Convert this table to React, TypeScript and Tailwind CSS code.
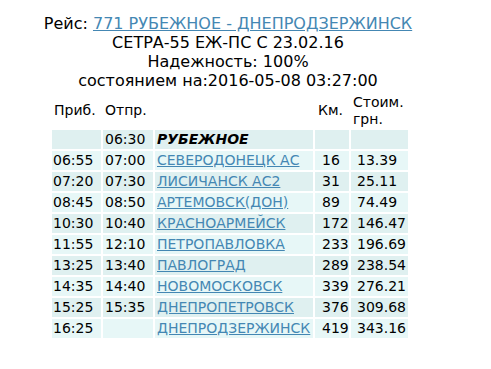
interface Stop {
  arr: string;
  dep: string;
  name: string;
  km: string;
  price: string;
  first?: boolean;
}

const stops: Stop[] = [
  { arr: "", dep: "06:30", name: "РУБЕЖНОЕ", km: "", price: "", first: true },
  { arr: "06:55", dep: "07:00", name: "СЕВЕРОДОНЕЦК АС", km: "16", price: "13.39" },
  { arr: "07:20", dep: "07:30", name: "ЛИСИЧАНСК АС2", km: "31", price: "25.11" },
  { arr: "08:45", dep: "08:50", name: "АРТЕМОВСК(ДОН)", km: "89", price: "74.49" },
  { arr: "10:30", dep: "10:40", name: "КРАСНОАРМЕЙСК", km: "172", price: "146.47" },
  { arr: "11:55", dep: "12:10", name: "ПЕТРОПАВЛОВКА", km: "233", price: "196.69" },
  { arr: "13:25", dep: "13:40", name: "ПАВЛОГРАД", km: "289", price: "238.54" },
  { arr: "14:35", dep: "14:40", name: "НОВОМОСКОВСК", km: "339", price: "276.21" },
  { arr: "15:25", dep: "15:35", name: "ДНЕПРОПЕТРОВСК", km: "376", price: "309.68" },
  { arr: "16:25", dep: "", name: "ДНЕПРОДЗЕРЖИНСК", km: "419", price: "343.16" },
];

export default function App() {
  return (
    <div className="w-[491px] h-[369px] bg-white text-black font-['DejaVu_Sans',Verdana,sans-serif]">
      <div className="w-[456px] pt-[14px] text-center text-[16px] leading-[19px]">
        <div>
          Рейс:{" "}
          <a href="#" className="text-[#4487b3] underline">
            771 РУБЕЖНОЕ - ДНЕПРОДЗЕРЖИНСК
          </a>
        </div>
        <div>СЕТРА-55 ЕЖ-ПС С 23.02.16</div>
        <div>Надежность: 100%</div>
        <div>состоянием на:2016-05-08 03:27:00</div>
      </div>
      <table className="ml-[50px] mt-[1px] border-separate border-spacing-[2px] text-[14px] leading-[17px]">
        <thead>
          <tr className="text-left align-middle">
            <th className="h-[35px] w-[49px] px-[2px] font-normal">Приб.</th>
            <th className="w-[50px] px-[2px] font-normal">Отпр.</th>
            <th className="w-[158px] font-normal"></th>
            <th className="w-[34px] pl-[3px] font-normal">Км.</th>
            <th className="w-[57px] pl-[2px] font-normal">Стоим. грн.</th>
          </tr>
        </thead>
        <tbody>
          {stops.map((s, i) => (
            <tr key={i} className={i % 2 === 0 ? "bg-[#dff0f0]" : "bg-[#e7f7f7]"}>
              <td className="h-[19px] pl-[1px] py-0">{s.arr}</td>
              <td className="pl-[2px] py-0">{s.dep}</td>
              <td className="pl-[2px] py-0 whitespace-nowrap">
                {s.first ? (
                  <b className="italic">{s.name}</b>
                ) : (
                  <a href="#" className="text-[#4487b3] underline">
                    {s.name}
                  </a>
                )}
              </td>
              <td className="pl-[7px] py-0">{s.km}</td>
              <td className="pl-[6px] pr-[1px] py-0">{s.price}</td>
            </tr>
          ))}
        </tbody>
      </table>
    </div>
  );
}
